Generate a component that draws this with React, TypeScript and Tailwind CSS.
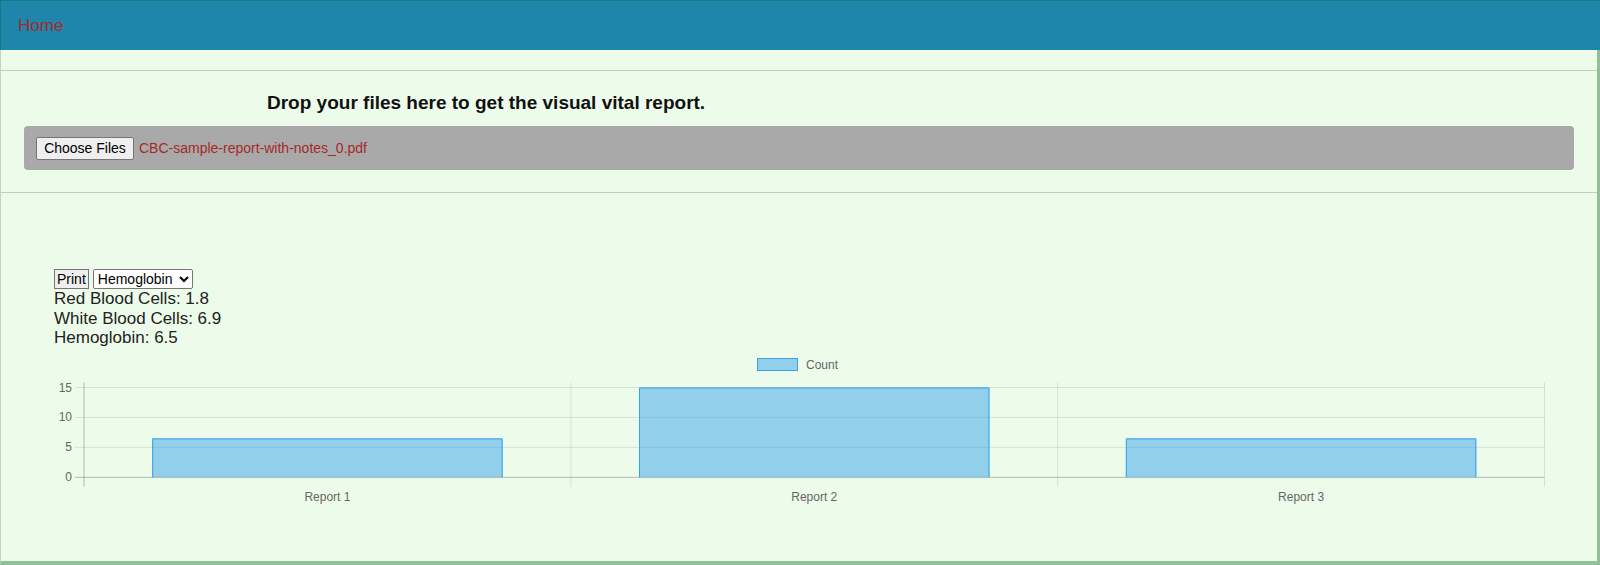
import React from 'react';

type Bar = { label: string; value: number };

const bars: Bar[] = [
  { label: 'Report 1', value: 6.5 },
  { label: 'Report 2', value: 15 },
  { label: 'Report 3', value: 6.5 },
];

// chart geometry (svg coords)
const left = 30;
const right = 1490.5;
const yTop = 39.5;
const yZero = 129.3;
const maxVal = 15;

const yFor = (v: number) => yZero - (v / maxVal) * (yZero - yTop);

const BarChart: React.FC = () => {
  const catW = (right - left) / bars.length;
  const barW = catW * 0.72;

  return (
    <svg width={1500} height={165} className="block" fontFamily="'Liberation Sans', Arial, sans-serif">
      {/* legend */}
      <rect x={703.5} y={10.5} width={40} height={12} fill="rgba(54,162,235,0.5)" stroke="#36a2eb" strokeWidth={1} />
      <text x={752} y={20.5} fontSize={12} fill="#666">Count</text>

      {/* horizontal grid */}
      {[0, 5, 10, 15].map(v => (
        <g key={v}>
          <line
            x1={21}
            x2={right}
            y1={yFor(v)}
            y2={yFor(v)}
            stroke={v === 0 ? 'rgba(0,0,0,0.25)' : 'rgba(0,0,0,0.1)'}
            strokeWidth={1}
          />
          <text x={18} y={yFor(v) + 4} fontSize={12} fill="#666" textAnchor="end">{v}</text>
        </g>
      ))}

      {/* vertical grid */}
      {[0, 1, 2, 3].map(i => (
        <line
          key={i}
          x1={left + catW * i}
          x2={left + catW * i}
          y1={34.5}
          y2={138.7}
          stroke={i === 0 ? 'rgba(0,0,0,0.25)' : 'rgba(0,0,0,0.1)'}
          strokeWidth={1}
        />
      ))}

      {bars.map((b, i) => {
        const x = left + catW * i + (catW - barW) / 2;
        const top = yFor(b.value);
        return (
          <g key={b.label}>
            <rect x={x} y={top} width={barW} height={yZero - top} fill="rgba(54,162,235,0.5)" />
            <path
              d={`M${x + 0.5} ${yZero} V${top + 0.5} H${x + barW - 0.5} V${yZero}`}
              fill="none"
              stroke="#36a2eb"
              strokeWidth={1}
            />
            <text x={left + catW * i + catW / 2} y={153} fontSize={12} fill="#666" textAnchor="middle">
              {b.label}
            </text>
          </g>
        );
      })}
    </svg>
  );
};

export default function App() {
  return (
    <div className="h-screen flex flex-col font-['Liberation_Sans',Arial,sans-serif]">
      <header className="h-[50px] shrink-0 bg-[#1f86ab] border-t border-l border-[#197486] flex items-center pl-[17px]">
        <a href="#" className="text-[17px] text-[#a52a2a]">Home</a>
      </header>

      <main className="flex-1 bg-[#edfcea] border-l border-l-[#bcd7be] border-r-[3px] border-r-[#8fc09c] border-b-[4px] border-b-[#8fc09c] pt-[20px]">
        <section className="border-y border-[#b9d5bb] px-[23px] pt-[21px] pb-[22px]">
          <h2 className="pl-[243px] text-[19px] leading-[22px] font-bold text-[#111]">
            Drop your files here to get the visual vital report.
          </h2>
          <div className="mt-[12px] h-[44px] rounded-[4px] bg-[#a9a9a9] flex items-center pl-[12px] gap-[5px]">
            <button
              type="button"
              className="w-[98px] h-[23px] flex items-center justify-center bg-[#efefef] border border-[#767676] rounded-[2px] text-[14px] text-black"
            >
              Choose Files
            </button>
            <span className="text-[14px] text-[#a52a2a]">CBC-sample-report-with-notes_0.pdf</span>
          </div>
        </section>

        <section className="pl-[53px] pt-[76px]">
          <div className="flex items-center gap-[4px] h-[20px]">
            <button
              type="button"
              className="h-[20px] px-[2px] bg-[#efefef] border border-[#767676] text-[14px] leading-none text-black"
            >
              Print
            </button>
            <select className="w-[100px] h-[20px] bg-white border border-[#767676] rounded-[2px] text-[14px] text-black">
              <option>Hemoglobin</option>
              <option>Red Blood Cells</option>
              <option>White Blood Cells</option>
            </select>
          </div>
          <div className="text-[17px] leading-[19.7px] text-[#222]">
            <div>Red Blood Cells: 1.8</div>
            <div>White Blood Cells: 6.9</div>
            <div>Hemoglobin: 6.5</div>
          </div>
          <BarChart />
        </section>
      </main>
    </div>
  );
}
